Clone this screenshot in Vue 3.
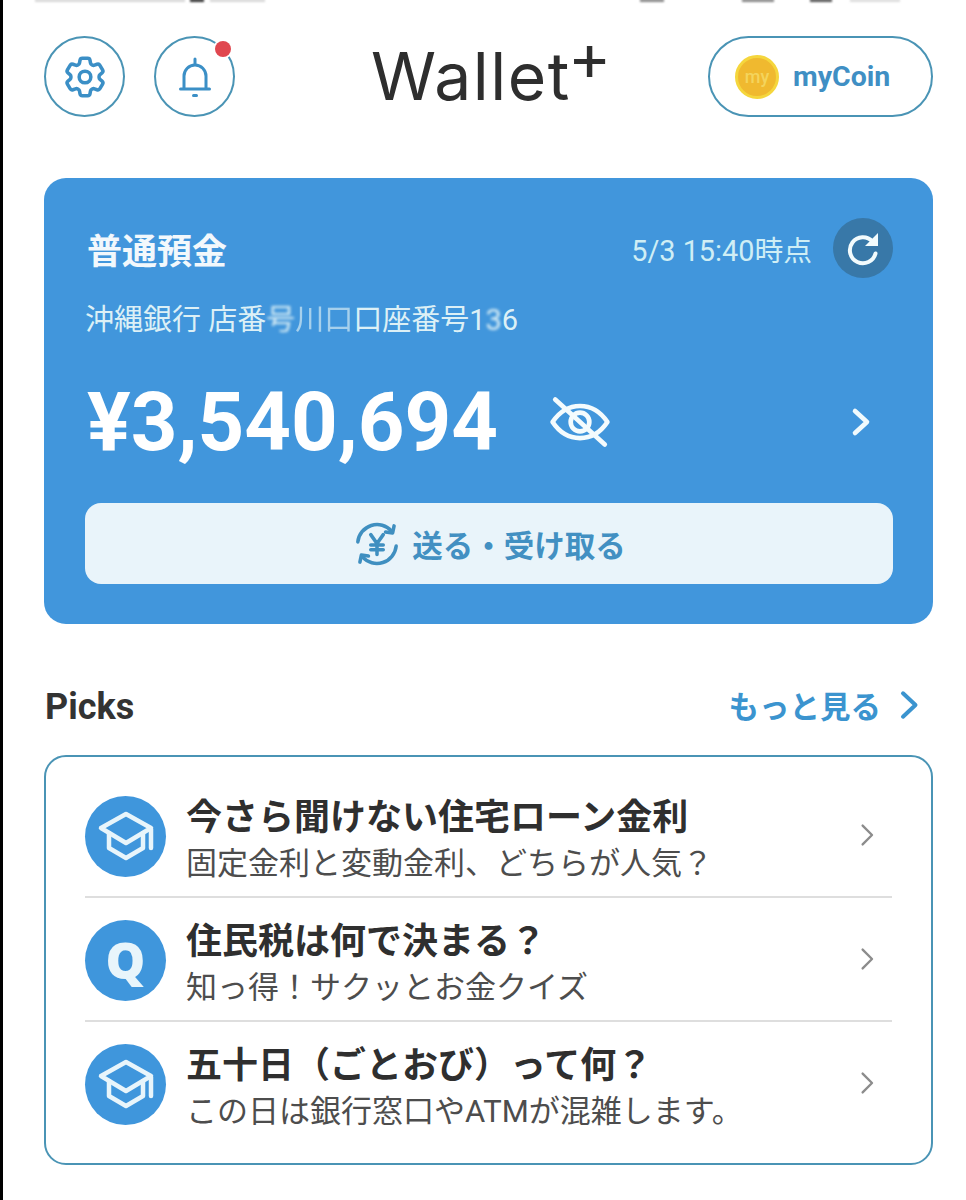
<template>
  <div class="page">
    <div class="status-cut">
      <i v-for="b in statusBits" :key="b.left" :style="{ left: b.left + 'px', width: b.width + 'px', background: b.color }"></i>
    </div>

    <header class="top">
      <div class="round-btns">
        <button class="round">
          <svg viewBox="0 0 24 24" width="50" height="50" fill="none" stroke="#3b8fc6" stroke-width="1.700" stroke-linejoin="round">
            <path d="M9.594 3.94c.09-.542.56-.94 1.11-.94h2.593c.55 0 1.02.398 1.11.94l.213 1.281c.063.374.313.686.645.87.074.04.147.083.22.127.325.196.72.257 1.075.124l1.217-.456a1.125 1.125 0 0 1 1.37.49l1.296 2.247a1.125 1.125 0 0 1-.26 1.431l-1.003.827c-.293.241-.438.613-.43.992a7.723 7.723 0 0 1 0 .255c-.008.378.137.75.43.991l1.004.827c.424.35.534.955.26 1.43l-1.298 2.247a1.125 1.125 0 0 1-1.369.491l-1.217-.456c-.355-.133-.75-.072-1.076.124a6.47 6.47 0 0 1-.22.128c-.331.183-.581.495-.644.869l-.213 1.281c-.09.543-.56.94-1.11.94h-2.594c-.55 0-1.019-.398-1.11-.94l-.213-1.281c-.062-.374-.312-.686-.644-.87a6.52 6.52 0 0 1-.22-.127c-.325-.196-.72-.257-1.076-.124l-1.217.456a1.125 1.125 0 0 1-1.369-.49l-1.297-2.247a1.125 1.125 0 0 1 .26-1.431l1.004-.827c.292-.24.437-.613.43-.991a6.932 6.932 0 0 1 0-.255c.007-.38-.138-.751-.43-.992l-1.004-.827a1.125 1.125 0 0 1-.26-1.43l1.297-2.247a1.125 1.125 0 0 1 1.37-.491l1.216.456c.356.133.751.072 1.076-.124.072-.044.146-.086.22-.128.332-.183.582-.495.644-.869l.214-1.28Z"/>
            <circle cx="12" cy="12" r="2.800"/>
          </svg>
        </button>
        <button class="round">
          <svg viewBox="0 0 48 48" width="48" height="48" fill="none" stroke="#3b8fc6" stroke-width="3" stroke-linecap="round">
            <path d="M13 35V23a11 11 0 0 1 22 0v12"/>
            <path d="M9.500 36h29"/>
            <path d="M24 6v5"/>
            <path d="M22.500 42.500h3"/>
          </svg>
          <i class="dot"></i>
        </button>
      </div>
      <div class="logo">Wallet<span class="plus">+</span></div>
      <button class="coin-btn">
        <span class="coin"><span>my</span></span>
        <span class="coin-label">myCoin</span>
      </button>
    </header>

    <section class="account">
      <div class="acc-head">
        <div class="acc-title">普通預金</div>
        <div class="acc-time">
          <span>5/3 15:40時点</span>
          <button class="refresh">
            <svg viewBox="0 0 60 60" width="60" height="60" fill="none">
              <path d="M39.500 23.500A13 13 0 1 0 42.500 35.500" stroke="#f2fbfd" stroke-width="4" stroke-linecap="round"/>
              <path d="M45 15v13H32z" fill="#f2fbfd"/>
            </svg>
          </button>
        </div>
      </div>
      <div class="acc-no">沖縄銀行 店番<span class="blur">号</span><span class="blur2">川口</span>口座番号1<span class="blur">3</span>6</div>
      <div class="balance-row">
        <div class="balance">¥3,540,694</div>
        <svg class="eye" viewBox="0 0 24 24" width="70" height="70" fill="none" stroke="#f4fbfd" stroke-width="1.600" stroke-linecap="round" stroke-linejoin="round">
          <path d="M2.600 12C5 8.400 8.300 6.500 12 6.500s7 1.900 9.400 5.500c-2.400 3.600-5.700 5.500-9.400 5.500S5 15.600 2.600 12z"/>
          <circle cx="12" cy="12" r="3.200"/>
          <path d="M3.500 4.300l17 15.400"/>
        </svg>
        <svg class="acc-arrow" viewBox="0 0 24 24" width="48" height="48" fill="none" stroke="#f0fafd" stroke-width="2.300" stroke-linecap="round" stroke-linejoin="round">
          <path d="M9 6.500l6 5.500-6 5.500"/>
        </svg>
      </div>
      <button class="send-btn">
        <svg viewBox="0 0 24 24" width="50" height="50" fill="none" stroke="#3f8fc0" stroke-width="1.700" stroke-linecap="round" stroke-linejoin="round">
          <path d="M2.800 11A9.300 9.300 0 0 1 19 5.800"/>
          <path d="M21.200 13A9.300 9.300 0 0 1 5 18.200"/>
          <path d="M20.200 3.300l-.7 3.400-3.400-.5"/>
          <path d="M3.800 20.700l.7-3.400 3.400.5"/>
          <path d="M9 7.500l3 4.300 3-4.300M12 11.800V17M9 12.500h6M9 14.800h6"/>
        </svg>
        <span>送る・受け取る</span>
      </button>
    </section>

    <div class="picks-head">
      <h2>Picks</h2>
      <div class="more">
        <span>もっと見る</span>
        <svg viewBox="0 0 24 24" width="40" height="40" fill="none" stroke="#3b94cf" stroke-width="2.400" stroke-linecap="round" stroke-linejoin="round">
          <path d="M9 5l7.500 7L9 19"/>
        </svg>
      </div>
    </div>

    <section class="picks">
      <div v-for="p in picks" :key="p.title" class="pick">
        <div class="pick-icon">
          <svg v-if="p.icon === 'cap'" viewBox="0 0 80 80" width="80" height="80" fill="none" stroke="#e8f5fb" stroke-width="4.500" stroke-linecap="round" stroke-linejoin="round">
            <path d="M15 32l25-14 25 14-25 15z"/>
            <path d="M23 37v15l17 10 17-10V37"/>
            <path d="M65 33v19"/>
          </svg>
          <span v-else class="q">Q</span>
        </div>
        <div class="pick-text">
          <div class="pick-title">{{ p.title }}</div>
          <div class="pick-sub">{{ p.sub }}</div>
        </div>
        <svg class="pick-arrow" viewBox="0 0 24 24" width="30" height="30" fill="none" stroke="#8c8c8c" stroke-width="1.900" stroke-linecap="round" stroke-linejoin="round">
          <path d="M8.500 4.500L16 12l-7.500 7.500"/>
        </svg>
      </div>
    </section>
  </div>
</template>

<script setup>
const picks = [
  { icon: 'cap', title: '今さら聞けない住宅ローン金利', sub: '固定金利と変動金利、どちらが人気？' },
  { icon: 'q', title: '住民税は何で決まる？', sub: '知っ得！サクッとお金クイズ' },
  { icon: 'cap', title: '五十日（ごとおび）って何？', sub: 'この日は銀行窓口やATMが混雑します。' }
]

// what is left of the cropped status bar along the top edge
const statusBits = [
  { left: 35, width: 150, color: '#d8d8d8' },
  { left: 190, width: 14, color: '#333' },
  { left: 210, width: 55, color: '#d8d8d8' },
  { left: 640, width: 24, color: '#888' },
  { left: 742, width: 32, color: '#888' },
  { left: 810, width: 22, color: '#555' },
  { left: 850, width: 50, color: '#ddd' }
]
</script>

<style>
html, body {
  margin: 0;
  background: #fff;
}
</style>

<style scoped>
.page {
  position: relative;
  width: 966px;
  height: 1200px;
  overflow: hidden;
  box-sizing: border-box;
  padding: 36px 33px 0 41px;
  background: #fff;
  font-family: Roboto, "Noto Sans CJK JP", sans-serif;
  color: #2b2b2b;
  border-left: 3px solid #000;
}

button {
  font: inherit;
  padding: 0;
  background: none;
  cursor: pointer;
}

.status-cut {
  position: absolute;
  top: 0;
  left: -3px;
  right: 0;
  height: 3px;
}

.status-cut i {
  position: absolute;
  top: -1px;
  height: 3px;
  filter: blur(1px);
}

.top {
  display: flex;
  align-items: center;
  height: 81px;
}

.round-btns {
  display: flex;
  gap: 29px;
}

.round {
  position: relative;
  width: 81px;
  height: 81px;
  box-sizing: border-box;
  border: 2px solid #4a94b5;
  border-radius: 50%;
  display: flex;
  align-items: center;
  justify-content: center;
}

.dot {
  position: absolute;
  top: 3px;
  right: 2px;
  width: 16px;
  height: 16px;
  border-radius: 50%;
  background: #e0474f;
  box-shadow: 0 0 0 2px #fff;
}

.logo {
  font-family: Inter, "Open Sans", sans-serif;
  font-weight: 400;
  font-size: 66px;
  line-height: 81px;
  letter-spacing: 1.500px;
  color: #2e2e2e;
  margin-left: 136px;
  display: flex;
}

.plus {
  font-size: 66px;
  line-height: 1;
  font-weight: 400;
  letter-spacing: 0;
  margin: -13px 0 0 -3px;
}

.coin-btn {
  margin-left: auto;
  width: 225px;
  height: 81px;
  box-sizing: border-box;
  border: 2px solid #4a94b5;
  border-radius: 41px;
  display: flex;
  align-items: center;
  padding-left: 25px;
  gap: 14px;
}

.coin {
  width: 44px;
  height: 44px;
  border-radius: 50%;
  background: #f0b92f;
  border: 3px solid #f5d63d;
  box-sizing: border-box;
  display: flex;
  align-items: center;
  justify-content: center;
  color: #f4d45c;
  font-size: 18px;
  font-weight: 500;
}

.coin-label {
  font-size: 28.500px;
  font-weight: 700;
  color: #3f8fc4;
}

.account {
  margin-top: 61px;
  height: 446px;
  box-sizing: border-box;
  background: #4196dc;
  border-radius: 22px;
  padding: 40px 40px 40px 41px;
  color: #fff;
  display: flex;
  flex-direction: column;
}

.acc-head {
  display: flex;
  justify-content: space-between;
  align-items: center;
  height: 60px;
}

.acc-title {
  font-size: 35px;
  font-weight: 700;
  color: #f2f8fc;
  padding: 0 0 0 2px;
}

.acc-time {
  display: flex;
  align-items: center;
  gap: 21px;
  font-size: 28.800px;
  color: #cfeef5;
}

.refresh {
  width: 60px;
  height: 60px;
  border: none;
  border-radius: 50%;
  background: #3878a8;
  display: flex;
}

.acc-no {
  margin-top: 21px;
  font-size: 29px;
  line-height: 42px;
  color: #dcf0f6;
}

.blur {
  filter: blur(1.500px);
  display: inline-block;
}

.blur2 {
  opacity: .65;
  display: inline-block;
  filter: blur(.6px);
}

.balance-row {
  display: flex;
  align-items: center;
  margin-top: 39px;
  height: 84px;
}

.balance {
  font-size: 81.500px;
  font-weight: 700;
  line-height: 84px;
  padding-left: 2px;
}

.eye {
  margin-left: 47px;
}

.acc-arrow {
  margin-left: auto;
  margin-right: 8px;
}

.send-btn {
  margin-top: auto;
  flex: none;
  height: 81px;
  border: none;
  border-radius: 16px;
  background: #e9f4fa;
  display: flex;
  align-items: center;
  justify-content: center;
  gap: 10px;
}

.send-btn span {
  font-size: 30.500px;
  font-weight: 700;
  color: #4290c2;
}

.picks-head {
  margin-top: 56px;
  display: flex;
  justify-content: space-between;
  align-items: center;
  height: 50px;
}

.picks-head h2 {
  margin: 0;
  padding: 3px 0 0 1px;
  font-size: 36px;
  font-weight: 700;
  color: #333;
}

.more {
  display: flex;
  align-items: center;
  gap: 7px;
  font-size: 30.500px;
  font-weight: 700;
  color: #3b94cf;
  margin-right: 5px;
}

.picks {
  margin-top: 25px;
  height: 410px;
  box-sizing: border-box;
  border: 2px solid #4a94b5;
  border-radius: 22px;
  padding: 17px 39px 0;
  display: flex;
  flex-direction: column;
}

.pick {
  height: 124px;
  flex: none;
  box-sizing: border-box;
  display: flex;
  align-items: center;
  border-bottom: 2px solid #dedede;
}

.pick:last-child {
  border-bottom-color: transparent;
}

.pick-icon {
  width: 81px;
  height: 81px;
  flex: none;
  margin-top: 2px;
  border-radius: 50%;
  background: #3f96dc;
  display: flex;
  align-items: center;
  justify-content: center;
}

.q {
  font-family: "Open Sans", Inter, sans-serif;
  font-size: 50px;
  font-weight: 800;
  color: #e8f5fb;
  line-height: 1;
}

.pick-text {
  margin-left: 20px;
  padding-top: 11px;
  flex: 1;
}

.pick-title {
  font-size: 36px;
  font-weight: 700;
  line-height: 46px;
  color: #2f2f2f;
}

.pick-sub {
  font-size: 31px;
  line-height: 46px;
  color: #4d4d4d;
}

.pick-arrow {
  margin-right: 10px;
}
</style>
